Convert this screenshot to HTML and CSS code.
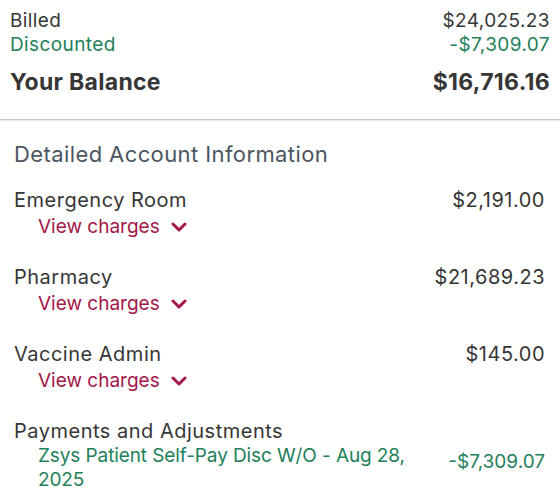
FILE: index.html
```html
<!doctype html>
<html>
<head>
  <meta charset="utf-8">
  <title>Account Balance</title>
  <link rel="stylesheet" href="styles.css">
</head>
<body>
  <div class="summary">
    <div class="line">
      <span>Billed</span>
      <span>$24,025.23</span>
    </div>
    <div class="line credit">
      <span>Discounted</span>
      <span>-$7,309.07</span>
    </div>
    <div class="line total">
      <span>Your Balance</span>
      <span>$16,716.16</span>
    </div>
  </div>

  <div class="details">
    <h2 class="details-title">Detailed Account Information</h2>

    <div class="item">
      <div class="line">
        <span>Emergency Room</span>
        <span>$2,191.00</span>
      </div>
      <a class="toggle" href="#">View charges
        <svg class="chevron" viewBox="0 0 16 10" width="16" height="10"><polyline points="2,2 8,8 14,2"/></svg>
      </a>
    </div>

    <div class="item">
      <div class="line">
        <span>Pharmacy</span>
        <span>$21,689.23</span>
      </div>
      <a class="toggle" href="#">View charges
        <svg class="chevron" viewBox="0 0 16 10" width="16" height="10"><polyline points="2,2 8,8 14,2"/></svg>
      </a>
    </div>

    <div class="item">
      <div class="line">
        <span>Vaccine Admin</span>
        <span>$145.00</span>
      </div>
      <a class="toggle" href="#">View charges
        <svg class="chevron" viewBox="0 0 16 10" width="16" height="10"><polyline points="2,2 8,8 14,2"/></svg>
      </a>
    </div>

    <div class="item">
      <div class="line">
        <span>Payments and Adjustments</span>
      </div>
      <div class="adjustment">
        <span class="adjustment-name">Zsys Patient Self-Pay Disc W/O - Aug 28, 2025</span>
        <span class="adjustment-amount">-$7,309.07</span>
      </div>
    </div>
  </div>
</body>
</html>
```

FILE: styles.css
```css
body {
  margin: 0;
  background-color: #fff;
  color: #363636;
  font-family: Inter, "Noto Sans", sans-serif;
  font-size: 19px;
  line-height: 24px;
}
.line {
  display: flex;
  justify-content: space-between;
}
.summary {
  padding: 9px 10px 23px 10px;
  border-bottom: 1px solid #c9c9c9;
  box-shadow: 0 1px 1px #ececec;
  letter-spacing: 0.4px;
}
.credit {
  color: #22805a;
}
.total {
  margin-top: 11px;
  font-size: 23px;
  font-weight: 700;
  line-height: 28px;
  letter-spacing: 0.3px;
}
.details {
  padding: 20px 15px 0 14px;
}
.details-title {
  margin: 0 0 20px 0;
  color: #4b5561;
  font-size: 22px;
  font-weight: 400;
  line-height: 28px;
  letter-spacing: 0.4px;
}
.item {
  margin-bottom: 26px;
}
.item .line {
  font-size: 20px;
  letter-spacing: 0.5px;
}
.toggle {
  display: inline-flex;
  align-items: center;
  gap: 11px;
  margin-top: 3px;
  margin-left: 24px;
  color: #a3164a;
  text-decoration: none;
}
.chevron {
  fill: none;
  stroke: #a3164a;
  stroke-width: 3;
  stroke-linecap: round;
  stroke-linejoin: round;
}
.adjustment {
  display: flex;
  justify-content: space-between;
  gap: 36px;
  margin-top: 1px;
  margin-left: 24px;
  color: #22805a;
}
.adjustment-name {
  letter-spacing: -0.1px;
}
.adjustment-amount {
  padding-top: 6px;
  white-space: nowrap;
}
```
